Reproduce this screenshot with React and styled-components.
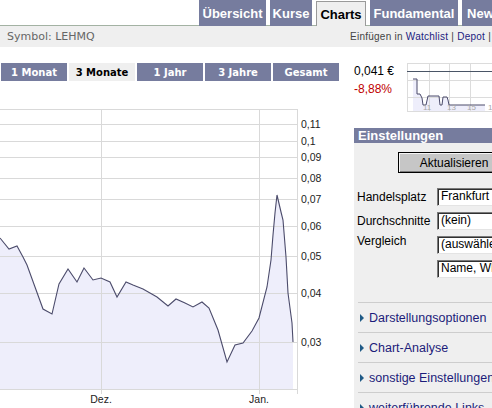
import React from "react";
import styled, { createGlobalStyle } from "styled-components";

const GlobalStyle = createGlobalStyle`
  html, body {
    margin: 0;
    padding: 0;
    background: #fff;
    overflow: hidden;
  }
  body {
    font-family: "Liberation Sans", Arial, sans-serif;
  }
`;

const Page = styled.div`
  width: 560px;
  height: 408px;
  overflow: hidden;
`;

const TabBar = styled.div`
  display: flex;
  align-items: flex-end;
  gap: 4px;
  height: 25px;
  padding-left: 199px;
  border-bottom: 1px solid #a3b2a3;
`;

const Tab = styled.div`
  box-sizing: border-box;
  width: ${(p) => p.$w}px;
  height: ${(p) => (p.$active ? 25 : 26)}px;
  margin-bottom: -1px;
  display: flex;
  align-items: center;
  justify-content: center;
  flex-shrink: 0;
  font-size: 13px;
  font-weight: bold;
  color: ${(p) => (p.$active ? "#000" : "#fff")};
  background: ${(p) => (p.$active ? "#efefef" : "#767c9e")};
  border: ${(p) => (p.$active ? "1px solid #9a9a9a" : "none")};
  border-bottom: none;
  white-space: nowrap;
`;

const SymbolBar = styled.div`
  display: grid;
  grid-template-columns: 350px auto;
  align-items: center;
  height: 21px;
  background: #efefef;
  white-space: nowrap;
`;

const SymbolText = styled.div`
  padding-left: 7px;
  font-family: "DejaVu Sans", Verdana, sans-serif;
  font-size: 11px;
  color: #666;
`;

const QuickLinks = styled.div`
  font-size: 10px;
  letter-spacing: 0.25px;
  color: #444;
`;

const LinkText = styled.span`
  color: #1c1c80;
`;

const Main = styled.div`
  display: flex;
  margin-top: 16px;
`;

const LeftColumn = styled.div`
  width: 340px;
  flex-shrink: 0;
`;

const PeriodRow = styled.div`
  display: flex;
  gap: 2px;
  padding-left: 1px;
`;

const PeriodButton = styled.div`
  width: 66px;
  height: 18px;
  display: flex;
  align-items: center;
  justify-content: center;
  font-family: "DejaVu Sans", Verdana, sans-serif;
  font-size: 10px;
  font-weight: bold;
  color: ${(p) => (p.$active ? "#000" : "#fff")};
  background: ${(p) => (p.$active ? "#efefef" : "#767c9e")};
`;

const ChartSvg = styled.svg`
  display: block;
  margin-top: 28px;
`;

const RightColumn = styled.div`
  margin-left: 14px;
  width: 190px;
  flex-shrink: 0;
`;

const QuoteRow = styled.div`
  display: flex;
  height: 49px;
`;

const PriceBlock = styled.div`
  width: 53px;
  font-size: 12px;
`;

const PriceValue = styled.div`
  line-height: 16px;
  color: #000;
`;

const ChangeValue = styled.div`
  line-height: 16px;
  margin-top: 2px;
  color: #c00000;
`;

const Panel = styled.div`
  margin-top: 16px;
  background: #efefef;
  height: 300px;
`;

const PanelHeader = styled.div`
  height: 15px;
  line-height: 15px;
  padding-left: 4px;
  background: #767c9e;
  color: #fff;
  font-size: 13px;
  font-weight: bold;
`;

const PanelBody = styled.div`
  padding-top: 9px;
`;

const RefreshButton = styled.div`
  box-sizing: border-box;
  margin-left: 44px;
  width: 112px;
  height: 21px;
  display: flex;
  align-items: center;
  justify-content: center;
  background: #c6c6c6;
  border: 1px solid #000;
  box-shadow: inset 1px 1px 0 #f4f4f4, inset -1px -1px 0 #7c7c7c;
  font-size: 12px;
  color: #000;
`;

const FormGrid = styled.div`
  display: grid;
  grid-template-columns: 80px 120px;
  row-gap: 6px;
  margin-top: 15px;
  padding-left: 3px;
  font-size: 12px;
`;

const FieldLabel = styled.div`
  align-self: ${(p) => (p.$top ? "start" : "center")};
  margin-top: ${(p) => (p.$top ? -2 : 0)}px;
  color: #000;
  white-space: nowrap;
`;

const Field = styled.div`
  box-sizing: border-box;
  height: 18px;
  line-height: 15px;
  padding-left: 3px;
  background: #fff;
  border-top: 1px solid #7a7a7a;
  border-left: 1px solid #7a7a7a;
  border-right: 1px solid #e4e4e4;
  border-bottom: 1px solid #e4e4e4;
  box-shadow: inset 1px 1px 0 #303030;
  color: #000;
  white-space: nowrap;
  overflow: hidden;
`;

const SectionList = styled.div`
  margin-top: 24px;
  margin-left: 4px;
`;

const SectionItem = styled.div`
  display: flex;
  align-items: center;
  gap: 5px;
  height: 29px;
  padding-left: 2px;
  border-top: 1px solid #cdcdcd;
  font-size: 12.5px;
  color: #1c1c7a;
  white-space: nowrap;
`;

const Arrow = styled.span`
  width: 0;
  height: 0;
  border-left: 4px solid #1f5a86;
  border-top: 4px solid transparent;
  border-bottom: 4px solid transparent;
`;

const tabs = [
  { label: "Übersicht", w: 67 },
  { label: "Kurse", w: 42 },
  { label: "Charts", w: 50, active: true },
  { label: "Fundamental", w: 88 },
  { label: "News", w: 44 },
];

const periods = ["1 Monat", "3 Monate", "1 Jahr", "3 Jahre", "Gesamt"];

const gridLines = [
  { y: 124, label: "0,11" },
  { y: 141, label: "0,1" },
  { y: 157, label: "0,09" },
  { y: 178, label: "0,08" },
  { y: 199, label: "0,07" },
  { y: 226, label: "0,06" },
  { y: 256, label: "0,05" },
  { y: 293, label: "0,04" },
  { y: 342, label: "0,03" },
];

const pricePoints = [
  [0, 238], [9, 249], [17, 246], [23, 257], [27, 265], [35, 287], [43, 309],
  [52, 314], [59, 284], [68, 269], [77, 282], [84, 268], [93, 280], [101, 278],
  [110, 282], [117, 297], [126, 282], [133, 285], [143, 289], [157, 297],
  [168, 306], [176, 299], [185, 303], [193, 307], [202, 302], [209, 308],
  [218, 330], [227, 362], [235, 345], [243, 343], [252, 331], [259, 318],
  [267, 287], [271, 260], [273, 235], [275, 213], [277, 195], [281, 212],
  [283, 220], [286, 257], [288, 293], [292, 323], [293, 342],
];

const miniPoints = [
  [6, 16], [10, 16], [10, 31], [13, 31], [15, 35], [16, 42], [19, 42],
  [21, 33], [32, 33], [33, 42], [35, 42], [36, 34], [40, 34], [41, 37],
  [42, 42], [78, 42],
];

const toPath = (pts) => pts.map(([x, y]) => `${x},${y}`).join(" ");

const PriceChart = () => {
  const fill = toPath([...pricePoints, [293, 389], [0, 389]]);
  return (
    <ChartSvg width="340" height="299" viewBox="0 109 340 299">
      <polygon points={fill} fill="#eeeefb" />
      <g stroke="#d9d9d9" strokeWidth="1" shapeRendering="crispEdges">
        <line x1="0" y1="109.5" x2="297" y2="109.5" />
        <line x1="0" y1="389.5" x2="297" y2="389.5" />
        {gridLines.map((g) => (
          <line key={g.y} x1="0" y1={g.y + 0.5} x2="297" y2={g.y + 0.5} />
        ))}
        <line x1="101.5" y1="109" x2="101.5" y2="394" />
        <line x1="259.5" y1="109" x2="259.5" y2="394" />
        <line x1="297.5" y1="109" x2="297.5" y2="394" />
      </g>
      <polyline
        points={toPath(pricePoints)}
        fill="none"
        stroke="#4b4b6b"
        strokeWidth="1.1"
      />
      <g
        fontFamily="Liberation Sans, Arial, sans-serif"
        fontSize="10.5"
        fill="#222"
      >
        {gridLines.map((g) => (
          <text key={g.label} x="301" y={g.y + 4}>
            {g.label}
          </text>
        ))}
        <text x="101" y="403" textAnchor="middle">Dez.</text>
        <text x="259" y="403" textAnchor="middle">Jan.</text>
      </g>
    </ChartSvg>
  );
};

const MiniChart = () => (
  <svg width="95" height="49" viewBox="0 0 95 49" style={{ display: "block" }}>
    <polygon points={toPath([...miniPoints, [78, 48], [6, 48]])} fill="#eeeefb" />
    <g stroke="#dcdcdc" strokeWidth="1" shapeRendering="crispEdges">
      <line x1="0" y1="0.5" x2="95" y2="0.5" />
      <line x1="0" y1="17.5" x2="95" y2="17.5" />
      <line x1="0" y1="34.5" x2="95" y2="34.5" />
      <line x1="0" y1="48.5" x2="95" y2="48.5" />
      <line x1="0.5" y1="0" x2="0.5" y2="49" />
      <line x1="22.5" y1="0" x2="22.5" y2="49" />
      <line x1="42.5" y1="0" x2="42.5" y2="49" />
      <line x1="63.5" y1="0" x2="63.5" y2="49" />
      <line x1="85.5" y1="0" x2="85.5" y2="49" />
    </g>
    <line x1="0" y1="8.5" x2="95" y2="8.5" stroke="#4a5566" strokeWidth="1" shapeRendering="crispEdges" />
    <polyline points={toPath(miniPoints)} fill="none" stroke="#4b4b6b" strokeWidth="1" />
    <g fontFamily="Liberation Sans, Arial, sans-serif" fontSize="8" fill="#a8a8a8">
      <text x="16" y="47">11</text>
      <text x="40" y="47">13</text>
      <text x="60" y="47">15</text>
      <text x="81" y="47">1</text>
    </g>
  </svg>
);

const App = () => (
  <Page>
    <GlobalStyle />
    <TabBar>
      {tabs.map((t) => (
        <Tab key={t.label} $w={t.w} $active={t.active}>
          {t.label}
        </Tab>
      ))}
    </TabBar>
    <SymbolBar>
      <SymbolText>Symbol: LEHMQ</SymbolText>
      <QuickLinks>
        Einfügen in <LinkText>Watchlist</LinkText> | <LinkText>Depot</LinkText> |
      </QuickLinks>
    </SymbolBar>
    <Main>
      <LeftColumn>
        <PeriodRow>
          {periods.map((p) => (
            <PeriodButton key={p} $active={p === "3 Monate"}>
              {p}
            </PeriodButton>
          ))}
        </PeriodRow>
        <PriceChart />
      </LeftColumn>
      <RightColumn>
        <QuoteRow>
          <PriceBlock>
            <PriceValue>0,041 €</PriceValue>
            <ChangeValue>-8,88%</ChangeValue>
          </PriceBlock>
          <MiniChart />
        </QuoteRow>
        <Panel>
          <PanelHeader>Einstellungen</PanelHeader>
          <PanelBody>
            <RefreshButton>Aktualisieren</RefreshButton>
            <FormGrid>
              <FieldLabel>Handelsplatz</FieldLabel>
              <Field>Frankfurt</Field>
              <FieldLabel>Durchschnitte</FieldLabel>
              <Field>(kein)</Field>
              <FieldLabel $top>Vergleich</FieldLabel>
              <Field>(auswählen)</Field>
              <span />
              <Field>Name, WKN, ISIN</Field>
            </FormGrid>
            <SectionList>
              <SectionItem><Arrow />Darstellungsoptionen</SectionItem>
              <SectionItem><Arrow />Chart-Analyse</SectionItem>
              <SectionItem><Arrow />sonstige Einstellungen</SectionItem>
              <SectionItem><Arrow />weiterführende Links</SectionItem>
            </SectionList>
          </PanelBody>
        </Panel>
      </RightColumn>
    </Main>
  </Page>
);

export default App;
